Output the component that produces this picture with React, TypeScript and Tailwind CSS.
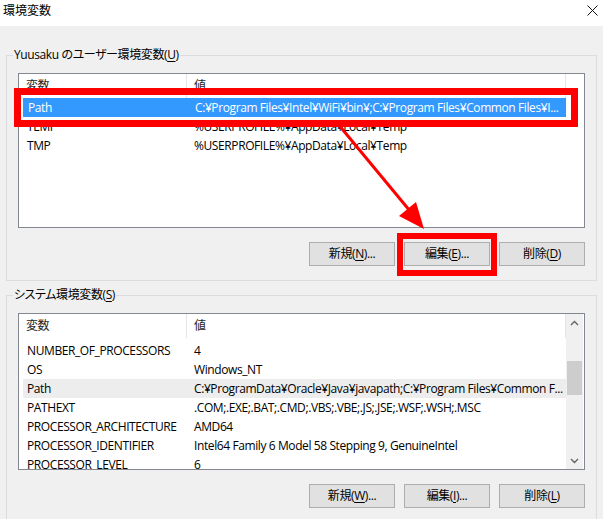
import React from "react";

const FONT = "font-['Segoe_UI','Open_Sans','Noto_Sans_CJK_JP',sans-serif] [font-feature-settings:'palt'] tracking-[-0.4px]";

function Mn({ children }: { children: React.ReactNode }) {
  return <span className="underline underline-offset-2">{children}</span>;
}

function Btn({ children }: { children: React.ReactNode }) {
  return (
    <div className="h-[24px] w-[86px] flex items-center justify-center bg-[#e1e1e1] border border-[#adadad] text-[12px] text-black">
      {children}
    </div>
  );
}

function Header() {
  return (
    <div className="flex h-[24px] items-center text-[12px] text-[#1e1e1e]">
      <div className="w-[168px] h-full flex items-center pl-[7px] border-r border-[#e5e5e5]">変数</div>
      <div className="w-[379px] h-full flex items-center pl-[7px] border-r border-[#e5e5e5]">値</div>
    </div>
  );
}

type Row = { name: string; value: string; sel?: boolean; hot?: boolean };

function Rows({ rows }: { rows: Row[] }) {
  return (
    <div className="flex flex-col">
      {rows.map((r) => (
        <div
          key={r.name}
          className={
            r.sel
              ? "ml-[4px] w-[543px] h-[19px] flex items-center bg-[#3399ff] text-white border border-dotted border-[#b07a40]"
              : r.hot
              ? "ml-[4px] w-[543px] h-[19px] flex items-center bg-[#ededed] text-black"
              : "ml-[4px] w-[543px] h-[19px] flex items-center text-black"
          }
        >
          <div className="w-[167px] pl-[4px] whitespace-nowrap">{r.name}</div>
          <div className="flex-1 pl-[4px] whitespace-nowrap overflow-hidden">{r.value}</div>
        </div>
      ))}
    </div>
  );
}

function Chevron({ up }: { up?: boolean }) {
  return (
    <svg width="9" height="6" viewBox="0 0 9 6">
      <path d={up ? "M1 5 L4.5 1.5 L8 5" : "M1 1 L4.5 4.5 L8 1"} fill="none" stroke="#606060" strokeWidth="1.3" />
    </svg>
  );
}

const userRows: Row[] = [
  { name: "Path", value: "C:¥Program Files¥Intel¥WiFi¥bin¥;C:¥Program Files¥Common Files¥I...", sel: true },
  { name: "TEMP", value: "%USERPROFILE%¥AppData¥Local¥Temp" },
  { name: "TMP", value: "%USERPROFILE%¥AppData¥Local¥Temp" },
];

const sysRows: Row[] = [
  { name: "NUMBER_OF_PROCESSORS", value: "4" },
  { name: "OS", value: "Windows_NT" },
  { name: "Path", value: "C:¥ProgramData¥Oracle¥Java¥javapath;C:¥Program Files¥Common F...", hot: true },
  { name: "PATHEXT", value: ".COM;.EXE;.BAT;.CMD;.VBS;.VBE;.JS;.JSE;.WSF;.WSH;.MSC" },
  { name: "PROCESSOR_ARCHITECTURE", value: "AMD64" },
  { name: "PROCESSOR_IDENTIFIER", value: "Intel64 Family 6 Model 58 Stepping 9, GenuineIntel" },
  { name: "PROCESSOR_LEVEL", value: "6" },
];

export default function App() {
  return (
    <div className={`relative w-[603px] h-[519px] overflow-hidden bg-[#f0f0f0] text-[12px] text-black ${FONT}`}>
      {/* title bar */}
      <div className="h-[26px] bg-white flex items-center justify-between pl-[3px] pr-[5px]">
        <span className="-mt-[5px] tracking-normal">環境変数</span>
        <svg width="11" height="11" viewBox="0 0 11 11" className="-mt-[5px]">
          <path d="M0.5 0.5 L10.5 10.5 M10.5 0.5 L0.5 10.5" stroke="#111" strokeWidth="1" />
        </svg>
      </div>

      {/* user variables */}
      <fieldset className="ml-[6px] mt-[21px] w-[591px] border border-[#dcdcdc] px-[11px] pt-[10px] pb-[14px]">
        <legend className="-ml-[5px] px-[1px] leading-[16px]">
          Yuusaku のユーザー環境変数(<Mn>U</Mn>)
        </legend>
        <div className="h-[155px] border border-[#828790] bg-white">
          <Header />
          <Rows rows={userRows} />
        </div>
        <div className="mt-[14px] flex justify-end gap-[9px]">
          <Btn>新規(<Mn>N</Mn>)...</Btn>
          <Btn>編集(<Mn>E</Mn>)...</Btn>
          <Btn>削除(<Mn>D</Mn>)</Btn>
        </div>
      </fieldset>

      {/* system variables */}
      <fieldset className="ml-[6px] mt-[6px] w-[591px] border border-[#dcdcdc] px-[11px] pt-[10px] pb-[14px]">
        <legend className="-ml-[5px] px-[1px] leading-[16px]">
          システム環境変数(<Mn>S</Mn>)
        </legend>
        <div className="h-[157px] border border-[#828790] bg-white flex overflow-hidden">
          <div className="w-[547px] overflow-hidden">
            <Header />
            <div className="h-[3px]" />
            <Rows rows={sysRows} />
          </div>
          <div className="w-[17px] flex flex-col bg-[#f0f0f0]">
            <div className="h-[17px] flex items-center justify-center">
              <Chevron up />
            </div>
            <div className="flex-1 px-[1px] pt-[30px]">
              <div className="h-[34px] bg-[#cdcdcd]" />
            </div>
            <div className="h-[17px] flex items-center justify-center">
              <Chevron />
            </div>
          </div>
        </div>
        <div className="mt-[14px] flex justify-end gap-[9px]">
          <Btn>新規(<Mn>W</Mn>)...</Btn>
          <Btn>編集(<Mn>I</Mn>)...</Btn>
          <Btn>削除(<Mn>L</Mn>)</Btn>
        </div>
      </fieldset>

      {/* annotation overlays */}
      <div className="absolute left-[14px] top-[88px] w-[564px] h-[39px] border-[7px] border-[#ff0000]" />
      <div className="absolute left-[397px] top-[233px] w-[100px] h-[43px] border-[6px] border-[#ff0000]" />
      <svg className="absolute left-0 top-0" width="603" height="519" viewBox="0 0 603 519">
        <line x1="338" y1="124" x2="410" y2="211" stroke="#ff0000" strokeWidth="3" />
        <polygon points="424,229 416,202 399,216" fill="#ff0000" />
      </svg>
    </div>
  );
}
